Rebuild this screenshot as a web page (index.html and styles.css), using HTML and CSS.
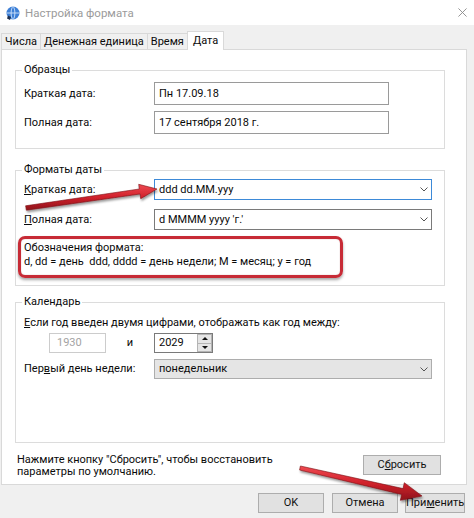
FILE: index.html
```html
<!DOCTYPE html>
<html lang="ru">
<head>
<meta charset="utf-8">
<title>Настройка формата</title>
<link rel="stylesheet" href="styles.css">
</head>
<body>
<div class="window">
  <div class="titlebar">
    <svg class="app-icon" viewBox="0 0 16 16">
      <circle cx="8" cy="8" r="6.5" fill="#3d7fd6"/>
      <path d="M2 8h12M8 1.5c-2.5 2-2.5 11 0 13M8 1.5c2.5 2 2.5 11 0 13" fill="none" stroke="#cfe3fb" stroke-width="0.9"/>
      <path d="M3 10.5l3 1.5-1 3-3-1.5z" fill="#1d2f4f"/>
    </svg>
    <span class="title">Настройка формата</span>
    <svg class="close" viewBox="0 0 10 10"><path d="M0.5 0.5l9 9M9.5 0.5l-9 9" stroke="#8a8a8a" stroke-width="1"/></svg>
  </div>
  <div class="tabs">
    <div class="tab">Числа</div>
    <div class="tab">Денежная единица</div>
    <div class="tab">Время</div>
    <div class="tab active">Дата</div>
  </div>
  <div class="panel">
    <fieldset class="group g-samples">
      <legend>Образцы</legend>
      <div class="row"><span class="label">Краткая дата:</span><div class="field">Пн 17.09.18</div></div>
      <div class="row"><span class="label">Полная дата:</span><div class="field">17 сентября 2018 г.</div></div>
    </fieldset>
    <fieldset class="group g-formats">
      <legend>Форматы даты</legend>
      <div class="row combo-row"><span class="label"><u>К</u>раткая дата:</span><div class="combo focused"><span>ddd dd.MM.yyy</span><svg class="chev" viewBox="0 0 8 5"><path d="M0.5 0.5l3.5 3.5 3.5-3.5" fill="none" stroke="#555" stroke-width="1"/></svg></div></div>
      <div class="row combo-row"><span class="label"><u>П</u>олная дата:</span><div class="combo"><span>d MMMM yyyy 'г.'</span><svg class="chev" viewBox="0 0 8 5"><path d="M0.5 0.5l3.5 3.5 3.5-3.5" fill="none" stroke="#555" stroke-width="1"/></svg></div></div>
      <div class="hint">Обозначения формата:<br>d, dd = день&nbsp; ddd, dddd = день недели; M = месяц; y = год</div>
    </fieldset>
    <fieldset class="group g-calendar">
      <legend>Календарь</legend>
      <div class="cal-line"><u>Е</u>сли год введен двумя цифрами, отображать как год между:</div>
      <div class="year-row">
        <div class="year">1930</div>
        <span class="and">и</span>
        <div class="spin">
          <span>2029</span>
          <div class="spin-btns">
            <div class="spin-btn"><svg viewBox="0 0 6 3"><path d="M0 3l3-3 3 3z" fill="#111"/></svg></div>
            <div class="spin-btn"><svg viewBox="0 0 6 3"><path d="M0 0l3 3 3-3z" fill="#111"/></svg></div>
          </div>
        </div>
      </div>
      <div class="row day-row"><span class="label">Пер<u>в</u>ый день недели:</span><div class="combo dropdown"><span>понедельник</span><svg class="chev" viewBox="0 0 8 5"><path d="M0.5 0.5l3.5 3.5 3.5-3.5" fill="none" stroke="#555" stroke-width="1"/></svg></div></div>
    </fieldset>
    <div class="reset-row">
      <p class="reset-text">Нажмите кнопку "Сбросить", чтобы восстановить<br>параметры по умолчанию.</p>
      <button class="btn reset">С<u>б</u>росить</button>
    </div>
  </div>
  <div class="footer">
    <button class="btn ok">OK</button>
    <button class="btn cancel">Отмена</button>
    <button class="btn apply">При<u>м</u>енить</button>
  </div>

  <div class="highlight"></div>
  <svg class="arrows" viewBox="0 0 474 518">
    <defs>
      <linearGradient id="red" x1="0" y1="0" x2="0" y2="1">
        <stop offset="0" stop-color="#ef4a52"/>
        <stop offset="0.5" stop-color="#d0212b"/>
        <stop offset="1" stop-color="#8e141b"/>
      </linearGradient>
      <filter id="sh" x="-10%" y="-50%" width="120%" height="200%">
        <feDropShadow dx="1" dy="2" stdDeviation="1.3" flood-color="#000" flood-opacity="0.4"/>
      </filter>
    </defs>
    <polygon filter="url(#sh)" fill="url(#red)" stroke="#7a1016" stroke-width="0.6"
      points="25.6,205.8 139.3,189.0 138.7,184.3 157,189 140.7,198.7 140.1,194.0 26.4,210.2"/>
    <polygon filter="url(#sh)" fill="url(#red)" stroke="#7a1016" stroke-width="0.6"
      points="300.4,466.0 403.0,488.6 404.3,482.7 422,496 400.3,500.3 401.6,494.4 299.6,470.0"/>
  </svg>
</div>
</body>
</html>
```
FILE: styles.css
```css
* { box-sizing: border-box; }
body { margin: 0; }
.window {
  position: relative;
  width: 474px;
  height: 518px;
  background: #f0f0f0;
  overflow: hidden;
  font-family: Roboto, "Noto Sans", sans-serif;
  font-size: 11px;
  line-height: 14px;
  color: #0a0a0a;
}
.titlebar {
  height: 25px;
  background: #fff;
  display: flex;
  align-items: center;
  padding: 0 7px 0 5px;
}
.app-icon { width: 16px; height: 16px; }
.title { margin-left: 4px; color: #9b9b9b; font-size: 11.5px; }
.close { margin-left: auto; width: 9px; height: 9px; }

.tabs {
  height: 24px;
  display: flex;
  align-items: flex-end;
  padding-left: 1px;
}
.tab {
  height: 16px;
  line-height: 15px;
  padding: 0 3px;
  border: 1px solid #d9d9d9;
  border-bottom: 0;
  margin-right: -1px;
  background: #f0f0f0;
}
.tab.active {
  position: relative;
  z-index: 1;
  height: 19px;
  line-height: 17px;
  padding: 0 5px;
  margin-bottom: -1px;
  background: #fff;
}

.panel {
  margin: 0 7px 0 1px;
  height: 436px;
  border: 1px solid #d9d9d9;
  background: #fff;
  padding: 12px 21px 0 13px;
  display: flex;
  flex-direction: column;
}
.group {
  margin: 0;
  min-width: 0;
  border: 1px solid #dcdcdc;
  padding: 4px 8px 14px;
}
.group legend {
  padding: 0 2px;
  margin-left: -2px;
  line-height: 16px;
}
.row { display: flex; align-items: center; }
.label { width: 130px; flex: none; }

.g-samples .row { height: 23px; }
.g-samples .row + .row { margin-top: 6px; }
.field {
  width: 235px;
  height: 23px;
  border: 1px solid #9a9a9a;
  padding-left: 4px;
  line-height: 21px;
}

.g-formats { margin-top: 13px; padding: 1px 8px 16px; }
.combo-row { height: 21px; }
.combo-row + .combo-row { margin-top: 9px; }
.combo {
  width: 278px;
  height: 21px;
  border: 1px solid #7a7a7a;
  padding: 0 3px 0 4px;
  display: flex;
  align-items: center;
  justify-content: space-between;
  background: #fff;
}
.combo.focused { border-color: #3d8ad8; }
.chev { width: 8px; height: 5px; }
.hint { margin-top: 11px; line-height: 14px; }

.g-calendar { margin-top: 8px; padding: 6px 8px 63px; }
.cal-line { line-height: 14px; }
.year-row { display: flex; align-items: center; margin-top: 3px; height: 20px; }
.year {
  margin-left: 25px;
  width: 57px;
  height: 20px;
  border: 1px solid #cccccc;
  color: #a3a3a3;
  padding-left: 7px;
  line-height: 18px;
}
.and { width: 48px; text-align: center; }
.spin {
  width: 59px;
  height: 20px;
  border: 1px solid #7a7a7a;
  display: flex;
  justify-content: space-between;
  padding-left: 4px;
  line-height: 18px;
}
.spin-btns { width: 15px; display: flex; flex-direction: column; }
.spin-btn {
  flex: 1;
  background: #e5e5e5;
  border: 1px solid #b4b4b4;
  display: flex;
  align-items: center;
  justify-content: center;
}
.spin-btn + .spin-btn { border-top: 0; }
.spin-btn svg { width: 6px; height: 3px; }
.day-row { margin-top: 6px; height: 20px; }
.combo.dropdown {
  height: 20px;
  background: #e5e5e5;
  border-color: #adadad;
}

.reset-row {
  display: flex;
  justify-content: space-between;
  align-items: flex-start;
  margin-top: 11px;
  padding: 0 4px 0 2px;
}
.reset-text { margin: 0; line-height: 12px; }
.btn {
  height: 20px;
  padding: 0;
  border: 1px solid #adadad;
  background: #e1e1e1;
  font-family: inherit;
  font-size: 11px;
  line-height: 18px;
  color: #111;
}
.reset { width: 78px; margin-top: 1px; }

.footer {
  display: flex;
  justify-content: flex-end;
  padding: 8px 9px 0 0;
}
.ok { width: 66px; margin-right: 8px; }
.cancel { width: 66px; margin-right: 7px; }
.apply { width: 60px; }

.highlight {
  position: absolute;
  left: 18px;
  top: 236px;
  width: 325px;
  height: 42px;
  border: 3px solid #c72b36;
  border-radius: 7px;
  box-shadow: 0 2px 3px rgba(0, 0, 0, 0.35), inset 0 0 1px rgba(120, 0, 0, 0.5);
}
.arrows {
  position: absolute;
  left: 0;
  top: 0;
  width: 474px;
  height: 518px;
  pointer-events: none;
}
```
